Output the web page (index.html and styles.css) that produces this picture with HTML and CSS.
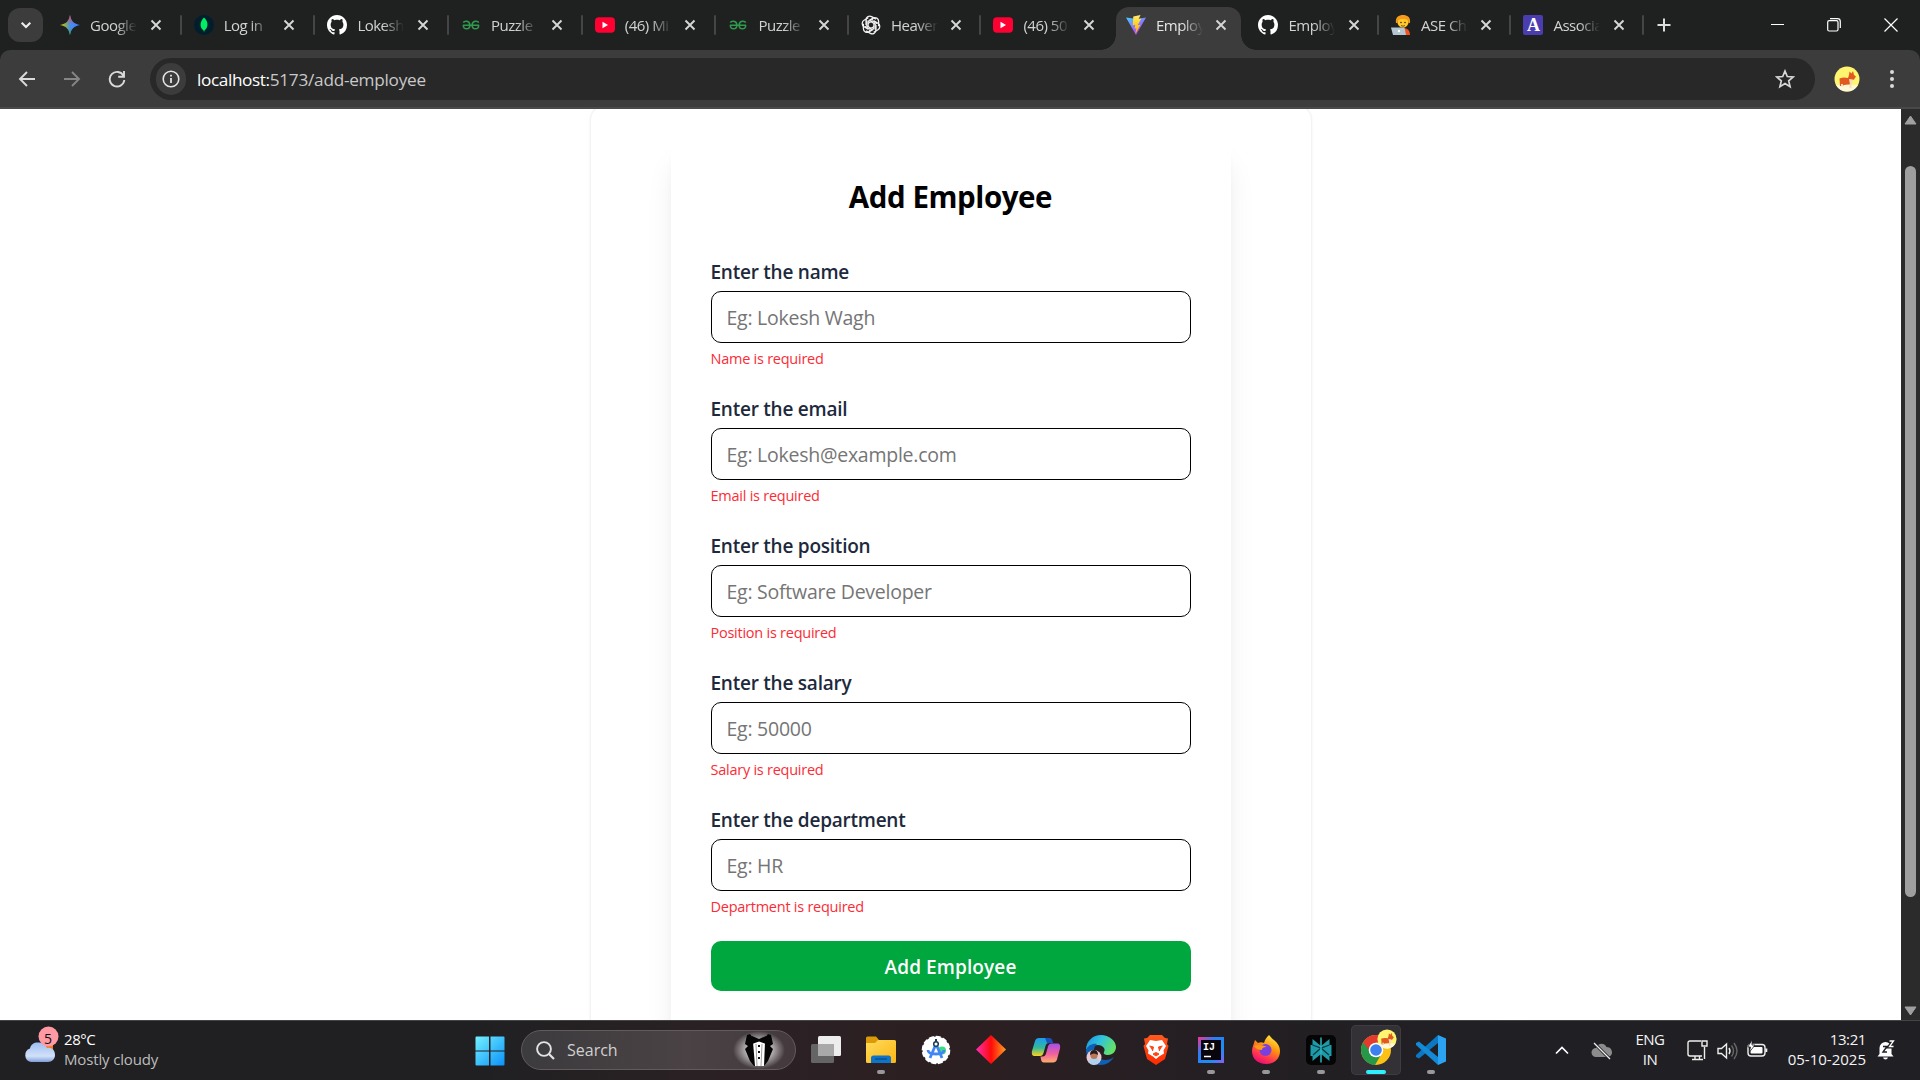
FILE: index.html
```html
<!DOCTYPE html>
<html lang="en">
<head>
<meta charset="utf-8">
<title>Employee</title>
<link rel="stylesheet" href="styles.css">
</head>
<body>
<svg class="defs" width="0" height="0" aria-hidden="true">
  <defs>
    <linearGradient id="spark" x1="0" y1=".5" x2="1" y2=".5"><stop offset="0" stop-color="#fbbc04"/><stop offset=".3" stop-color="#7fae5c"/><stop offset=".5" stop-color="#4a8cf0"/><stop offset="1" stop-color="#3b82f6"/></linearGradient>
    <linearGradient id="sparkTop" x1="0" y1="0" x2="0" y2="1"><stop offset="0" stop-color="#f0453a"/><stop offset=".45" stop-color="#f0453a" stop-opacity="0"/><stop offset=".65" stop-color="#34a853" stop-opacity="0"/><stop offset="1" stop-color="#34a853"/></linearGradient>
    <linearGradient id="vite" x1="0" y1="0" x2=".6" y2="1"><stop offset="0" stop-color="#41d1ff"/><stop offset="1" stop-color="#bd34fe"/></linearGradient>
    <linearGradient id="bolt" x1="0" y1="0" x2="0" y2="1"><stop offset="0" stop-color="#ffea83"/><stop offset=".3" stop-color="#ffdd35"/><stop offset="1" stop-color="#ffa800"/></linearGradient>
    <linearGradient id="win" x1="0" y1="0" x2="1" y2="1"><stop offset="0" stop-color="#74f0ff"/><stop offset="1" stop-color="#0a92f8"/></linearGradient>
    <linearGradient id="cloud" x1="0" y1="0" x2="0" y2="1"><stop offset="0" stop-color="#9dbdf3"/><stop offset=".7" stop-color="#d3e1f8"/><stop offset="1" stop-color="#7e9fdc"/></linearGradient>
    <linearGradient id="folder" x1="0" y1="0" x2="1" y2="1"><stop offset="0" stop-color="#ffdb5c"/><stop offset="1" stop-color="#fbb613"/></linearGradient>
    <linearGradient id="diamond"><stop offset="0" stop-color="#ff2fb4"/><stop offset=".5" stop-color="#ff0a0a"/><stop offset="1" stop-color="#ffa01e"/></linearGradient>
    <linearGradient id="copA" x1="0" y1="0" x2="0" y2="1"><stop offset="0" stop-color="#1d9bf0"/><stop offset=".55" stop-color="#35b99a"/><stop offset="1" stop-color="#ffd21c"/></linearGradient>
    <linearGradient id="copB" x1="0" y1="0" x2="0" y2="1"><stop offset="0" stop-color="#a250e8"/><stop offset=".55" stop-color="#f0609c"/><stop offset="1" stop-color="#ffae6b"/></linearGradient>
    <linearGradient id="edgeTop" x1="0" y1="0" x2="1" y2=".4"><stop offset="0" stop-color="#1c8fe0"/><stop offset=".5" stop-color="#2fc2df"/><stop offset="1" stop-color="#63e06a"/></linearGradient>
    <linearGradient id="brave" x1="0" y1="0" x2="0" y2="1"><stop offset="0" stop-color="#ff5a1f"/><stop offset="1" stop-color="#ff2a00"/></linearGradient>
    <linearGradient id="ij" x1="0" y1="0" x2="1" y2="1"><stop offset="0" stop-color="#ff318c"/><stop offset=".35" stop-color="#2c7df7"/><stop offset=".7" stop-color="#1f8df5"/><stop offset="1" stop-color="#8d5bf5"/></linearGradient>
    <linearGradient id="fox" x1=".8" y1="0" x2=".3" y2="1"><stop offset="0" stop-color="#fff14a"/><stop offset=".4" stop-color="#ff980e"/><stop offset=".75" stop-color="#ff3750"/><stop offset="1" stop-color="#eb0878"/></linearGradient>
    <linearGradient id="battle" x1="0" y1="0" x2="1" y2="0"><stop offset="0" stop-color="#0a7cc8"/><stop offset="1" stop-color="#35b0f5"/></linearGradient>
    <radialGradient id="glow"><stop offset="0" stop-color="#fff"/><stop offset=".5" stop-color="#fff" stop-opacity=".6"/><stop offset="1" stop-color="#fff" stop-opacity="0"/></radialGradient>
    <symbol id="x" viewBox="0 0 12 12"><path d="M1.500 1.500l9 9M10.500 1.500l-9 9" stroke="#d6d6d6" stroke-width="1.900" fill="none"/></symbol>
    <symbol id="github" viewBox="0 0 16 16"><path fill="#fff" d="M8 0C3.580 0 0 3.580 0 8c0 3.540 2.290 6.530 5.470 7.590.4.070.550-.170.550-.380 0-.190-.010-.820-.010-1.490-2.010.370-2.530-.490-2.690-.940-.090-.230-.480-.940-.820-1.130-.280-.150-.680-.520-.010-.530.630-.010 1.080.580 1.230.820.720 1.210 1.870.870 2.330.660.070-.520.280-.870.510-1.070-1.780-.200-3.640-.890-3.640-3.950 0-.870.310-1.590.820-2.150-.080-.200-.360-1.020.080-2.120 0 0 .670-.210 2.200.820.640-.180 1.320-.270 2-.270s1.360.090 2 .270c1.530-1.040 2.200-.820 2.200-.820.440 1.100.160 1.920.080 2.120.510.560.820 1.270.820 2.150 0 3.070-1.870 3.750-3.650 3.950.290.250.540.730.540 1.480 0 1.070-.010 1.930-.010 2.200 0 .210.150.460.550.380A8.010 8.010 0 0 0 16 8c0-4.420-3.580-8-8-8z"/></symbol>
    <symbol id="gfg" viewBox="0 0 20 12"><path d="M1 6.200h18M1.500 3.400C2.400 1.200 8.700.500 8.700 6.200c0 5.300-7 5.300-7.300 0M18.500 3.400C17.600 1.200 11.300.500 11.300 6.200c0 5.300 7 5.300 7.300 0" fill="none" stroke="#2f9a4c" stroke-width="1.700"/></symbol>
    <symbol id="yt" viewBox="0 0 20 15.500"><rect width="20" height="15.500" rx="4" fill="#ff0033"/><path d="M7.500 4.500v6.500l5.500-3.250z" fill="#fff"/></symbol>
    <symbol id="corgi" viewBox="0 0 26 26"><circle cx="13" cy="13" r="12.500" fill="#fff570"/><path d="M2 19h22a12.500 12.500 0 0 1-22 0z" fill="#fff8d8"/><path d="M5.500 12.500q4-1.500 8.500-.5l1-3 .5-3.500 2 2L19 5l1 4 2 1.500-2 3-2 1-1 4h-3l-4 .5-1.500 1H6z" fill="#e2591f"/><path d="M15 13l4 .5-1 5h-2zM15.500 18h2v4h-2zM7 18h2v2.500H7z" fill="#fbdcb4"/></symbol>
  </defs>
</svg>

<header class="tabstrip">
  <button class="tab-search"><svg width="12" height="12" viewBox="0 0 12 12"><path d="M1.700 3.800L6 8l4.300-4.200" fill="none" stroke="#eee" stroke-width="2.100"/></svg></button>
  <nav class="tabs">
    <div class="tab"><svg class="fav" viewBox="0 0 20 20"><path fill="url(#spark)" d="M10 0c1 6 4 9 10 10-6 1-9 4-10 10C9 14 6 11 0 10 6 9 9 6 10 0z"/><path fill="url(#sparkTop)" d="M10 0c1 6 4 9 10 10-6 1-9 4-10 10C9 14 6 11 0 10 6 9 9 6 10 0z"/></svg><span class="tab-title">Google</span><svg class="close"><use href="#x"/></svg></div>
    <div class="tab"><svg class="fav" viewBox="0 0 20 20"><circle cx="10" cy="10" r="10" fill="#001e2b"/><path d="M10 2.500c3 3 3.700 5.200 3.400 8-.3 2.300-1.500 3.800-3 5l-.3 2-.5-2c-1.500-1.200-2.800-2.700-3-5-.200-2.800.7-5 3.400-8z" fill="#00ed64"/></svg><span class="tab-title">Log in</span><svg class="close"><use href="#x"/></svg></div>
    <div class="tab"><svg class="fav"><use href="#github"/></svg><span class="tab-title">Lokesh</span><svg class="close"><use href="#x"/></svg></div>
    <div class="tab"><svg class="fav"><use href="#gfg" x="1" width="18"/></svg><span class="tab-title">Puzzle</span><svg class="close"><use href="#x"/></svg></div>
    <div class="tab"><svg class="fav"><use href="#yt"/></svg><span class="tab-title">(46) Mi</span><svg class="close"><use href="#x"/></svg></div>
    <div class="tab"><svg class="fav"><use href="#gfg" x="1" width="18"/></svg><span class="tab-title">Puzzle</span><svg class="close"><use href="#x"/></svg></div>
    <div class="tab"><svg class="fav" viewBox="-10 -10 20 20"><g fill="none" stroke="#f2f2f2" stroke-width="1.300"><path id="petal" d="M-2.500-4.300L2-6.900C4.500-8.300 7.600-6.400 7.600-3.700V1.300"/><use href="#petal" transform="rotate(60)"/><use href="#petal" transform="rotate(120)"/><use href="#petal" transform="rotate(180)"/><use href="#petal" transform="rotate(240)"/><use href="#petal" transform="rotate(300)"/><path id="spoke" d="M-2.900 2V-3.200L2-6"/><use href="#spoke" transform="rotate(60)"/><use href="#spoke" transform="rotate(120)"/><use href="#spoke" transform="rotate(180)"/><use href="#spoke" transform="rotate(240)"/><use href="#spoke" transform="rotate(300)"/></g></svg><span class="tab-title">Heaven</span><svg class="close"><use href="#x"/></svg></div>
    <div class="tab"><svg class="fav"><use href="#yt"/></svg><span class="tab-title">(46) 50</span><svg class="close"><use href="#x"/></svg></div>
    <div class="tab active"><svg class="fav" viewBox="0 0 20 20"><path d="M0 2.500L10 20 20 2.500l-9 1.600z" fill="url(#vite)"/><path d="M14.500 0L7.300 1.400l-.6 8.800 2.600-.5-.8 4 1.800-.5-1 6 5-9.500-2.700.5 3.800-6.700-2.700.4z" fill="url(#bolt)"/></svg><span class="tab-title">Employ</span><svg class="close"><use href="#x"/></svg></div>
    <div class="tab"><svg class="fav"><use href="#github"/></svg><span class="tab-title">Employ</span><svg class="close"><use href="#x"/></svg></div>
    <div class="tab"><svg class="fav" viewBox="0 0 20 20"><path d="M4 20c0-5 3-7 8-7 5 0 7 3 7 7z" fill="#f4511e"/><circle cx="12" cy="7" r="5.600" fill="#ffca28"/><path d="M5 8C4 2 8 0 12 0s8 2 7 8h-1.500c0-3-2-4-5.500-4S6.500 5 6.500 8z" fill="#f59a1c"/><path d="M10 10.500q2 1.500 4 0" stroke="#8a4b14" fill="none"/><circle cx="10" cy="7.500" r=".8" fill="#3c2a1a"/><circle cx="14" cy="7.500" r=".8" fill="#3c2a1a"/><path d="M0 12.500h13.500l1.500 7.500H2z" fill="#b4c6d2"/><circle cx="8" cy="16" r="1.200" fill="#fff"/></svg><span class="tab-title">ASE Ch</span><svg class="close"><use href="#x"/></svg></div>
    <div class="tab"><span class="fav letter">A</span><span class="tab-title">Associa</span><svg class="close"><use href="#x"/></svg></div>
  </nav>
  <button class="new-tab"><svg width="14" height="14" viewBox="0 0 14 14"><path d="M7 .5v13M.5 7h13" stroke="#ddd" stroke-width="2"/></svg></button>
  <div class="window-controls">
    <svg width="14" height="14"><path d="M1 6.500h13" stroke="#fff" stroke-width="1"/></svg>
    <svg width="14" height="14"><rect x=".7" y="2.700" width="10.300" height="10.300" rx="1.500" fill="none" stroke="#fff" stroke-width="1.200"/><path d="M3 .7h7.500a2.800 2.800 0 0 1 2.800 2.800V10" fill="none" stroke="#fff" stroke-width="1.200"/></svg>
    <svg width="14" height="14"><path d="M.5.5l13 13M13.500.5l-13 13" stroke="#fff" stroke-width="1.200"/></svg>
  </div>
</header>

<div class="toolbar-wrap">
<div class="toolbar">
  <svg class="nav" viewBox="0 0 18 18"><path d="M17 9H2.500M9 2L2 9l7 7" fill="none" stroke="#dadada" stroke-width="1.900"/></svg>
  <svg class="nav" viewBox="0 0 18 18"><path d="M1 9h14.500M9 2l7 7-7 7" fill="none" stroke="#858585" stroke-width="1.900"/></svg>
  <svg class="nav" viewBox="0 0 18 18"><path d="M15.500 5.800A7.300 7.300 0 1 0 16.300 10M16 1v5.800h-5.800" fill="none" stroke="#dadada" stroke-width="1.900"/></svg>
  <div class="omnibox">
    <span class="info"><svg width="18" height="18" viewBox="0 0 18 18"><circle cx="9" cy="9" r="7.800" fill="none" stroke="#e4e4e4" stroke-width="1.600"/><path d="M9 8v5M9 4.800v1.800" stroke="#e4e4e4" stroke-width="1.800"/></svg></span>
    <span class="url"><b>localhost:</b>5173/add-employee</span>
    <svg class="star" width="20" height="20" viewBox="0 0 20 20"><path d="M10 2l2.300 5.500 5.900.5-4.500 3.900 1.400 5.800L10 14.600l-5.100 3.100 1.400-5.800L1.800 8l5.900-.5z" fill="none" stroke="#d8d8d8" stroke-width="1.700"/></svg>
  </div>
  <svg class="avatar"><use href="#corgi"/></svg>
  <svg class="menu" width="6" height="20"><g fill="#dadada"><circle cx="3" cy="3" r="2"/><circle cx="3" cy="10" r="2"/><circle cx="3" cy="17" r="2"/></g></svg>
</div>
</div>

<main class="viewport">
  <div class="page">
    <section class="panel">
      <form class="card">
        <h1>Add Employee</h1>
        <div class="field"><label>Enter the name</label><div class="input">Eg: Lokesh Wagh</div><p>Name is required</p></div>
        <div class="field"><label>Enter the email</label><div class="input">Eg: Lokesh@example.com</div><p>Email is required</p></div>
        <div class="field"><label>Enter the position</label><div class="input">Eg: Software Developer</div><p>Position is required</p></div>
        <div class="field"><label>Enter the salary</label><div class="input">Eg: 50000</div><p>Salary is required</p></div>
        <div class="field"><label>Enter the department</label><div class="input">Eg: HR</div><p>Department is required</p></div>
        <button class="submit">Add Employee</button>
      </form>
    </section>
  </div>
  <aside class="scrollbar">
    <svg width="13" height="10"><path d="M6.500 1L12 9H1z" fill="#a0a0a0" stroke="#a0a0a0" stroke-linejoin="round"/></svg>
    <div class="track"><div class="thumb"></div></div>
    <svg width="13" height="10"><path d="M6.500 9L12 1H1z" fill="#a0a0a0" stroke="#a0a0a0" stroke-linejoin="round"/></svg>
  </aside>
</main>

<footer class="taskbar">
  <div class="weather">
    <svg width="36" height="38" viewBox="0 0 36 38"><path d="M18 15h11v10H18z" fill="#f47a16"/><path d="M7 36a7 7 0 0 1-1-13.500C7 17.500 11 16 15 16.500c5 .5 7 3.500 8 5.500 5-1 8 2.500 8 7 0 4-3 7-7 7z" fill="url(#cloud)"/><circle cx="24.500" cy="10.500" r="10" fill="#ff99a4"/></svg>
    <span class="badge">5</span>
    <div class="weather-text"><span class="bright">28°C</span><span>Mostly cloudy</span></div>
  </div>
  <div class="apps">
    <svg class="app start" viewBox="0 0 30 30"><path fill="url(#win)" d="M.5 1.500Q.5.500 1.500.5H14v14H.5zM15.500.5h13q1 0 1 1v13h-14zM.5 15.500H14v14H1.500q-1 0-1-1zM15.500 15.500h14v13q0 1-1 1h-13z"/></svg>
    <div class="search">
      <svg width="19" height="19" viewBox="0 0 19 19"><circle cx="8" cy="8" r="6.900" fill="none" stroke="#e3e3e3" stroke-width="1.900"/><path d="M13 13l5 5" stroke="#e3e3e3" stroke-width="2.200"/></svg>
      <span>Search</span>
      <svg class="tux" width="52" height="38" viewBox="0 0 52 38"><ellipse cx="26" cy="19" rx="26" ry="19" fill="url(#glow)"/><path d="M17 3l-3 1-2 9 3 2-3 3 5 12 4 5h10l4-5 5-12-3-3 3-2-2-9-3-1-4 5-5 1-5-1z" fill="#050505"/><path d="M20 11l6-1 6 1-1 24H22z" fill="#fff"/><path d="M19 5l7 3 7-3v8l-7-2.500L19 13z" fill="#050505"/><path d="M23 13l1 22M29 13l-1 22" stroke="#777" stroke-width=".7"/><path d="M26 14v2M26 20v2M26 26v2" stroke="#111" stroke-width="2"/></svg>
    </div>
    <div class="slot"><svg class="app" viewBox="0 0 30 30"><rect x="7" y="1" width="23" height="20" rx="1.500" fill="#ededed"/><rect y="9" width="23" height="19" rx="1.500" fill="#656565"/><path d="M7 9h16v12H7z" fill="#a9a9a9"/></svg></div>
    <div class="slot run"><svg class="app" viewBox="0 0 30 30"><path d="M0 3q0-1.500 1.500-1.500H10L13 5v4H0z" fill="#dd9a08"/><path d="M0 8h9l3-3h16.500Q30 5 30 6.500V26.500Q30 28 28.500 28H1.500Q0 28 0 26.500z" fill="url(#folder)"/><path d="M5 28v-5q0-2.500 2.500-2.500h15q2.500 0 2.500 2.500v5z" fill="#0f74c8"/><path d="M9 24h12" stroke="#08406f"/></svg></div>
    <div class="slot"><svg class="app" viewBox="0 0 30 30"><circle cx="15" cy="15" r="13.500" fill="#fff" stroke="#fff" stroke-width="1.600" stroke-dasharray="5 2"/><circle cx="21" cy="15.500" r="4" fill="#3ddc84"/><path d="M15 9L9 23M15 9l6 14M7 15q0 4 8 4t8-4" stroke="#4285f4" stroke-width="2.800" fill="none"/><circle cx="15" cy="9" r="2.300" fill="#fff" stroke="#1b3a57" stroke-width="1.500"/><path d="M15 4v3" stroke="#1b3a57" stroke-width="2"/></svg></div>
    <div class="slot"><svg class="app" viewBox="0 0 30 30"><path d="M15 0l15 14.500L15 29 0 14.500z" fill="url(#diamond)"/></svg></div>
    <div class="slot"><svg class="app" viewBox="0 0 30 30"><path d="M8 3h9c2 0 3 1 3.500 3l.5 2h-3c-2 0-3 1-3.500 3l-2 7c-.6 2-1.600 3-3.500 3H4c-3 0-3.500-2-3-5L4 6c.6-2 2-3 4-3z" fill="url(#copA)"/><path d="M14 3h4c2 0 3 1 3.500 3l.6 2h-6z" fill="#1554c0"/><path d="M22 27.500h-9c-2 0-2.500-1-3-3l-.5-3h2c2 0 3-1 3.500-3l2-7c.6-2 1.600-3 3.500-3H26c3 0 3.500 2 3 5l-3 11c-.6 2-2 3-4 3z" fill="url(#copB)"/></svg></div>
    <div class="slot"><svg class="app" viewBox="0 0 30 30"><path d="M0 15C0 6 7 0 15 0s15 6 15 12c0 5-4 8-8 8-3 0-5-1-4-3 2-3-1-7-6-7C6 10 2 13 0 15z" fill="url(#edgeTop)"/><path d="M0 15c2-5 7-7 11-6-4 3-4 9 0 13 5 4 12 4 17 0-3 5-8 8-13 8C6 30 0 23 0 15z" fill="#0f5fb5"/><circle cx="8" cy="22.500" r="7.500" fill="#e9c9cf"/><path d="M2.500 27q1-4 5.500-4t5.500 4Q8 32 2.500 27z" fill="#a9d3ee"/><circle cx="8" cy="20.500" r="3.600" fill="#b97858"/><path d="M4 20q0-5 4-5t4 5q-4-3-8 0z" fill="#2a1b18"/></svg></div>
    <div class="slot"><svg class="app" viewBox="0 0 30 30"><path d="M9 0h12l3 3 3 .5L26 9l1.500 2L24 24l-9 6-9-6L2.500 11 4 9 3 3.500 6 3z" fill="url(#brave)"/><path d="M9 5l6 1 6-1 4 6-2.500 4.500.5 3-5 3-3 2.500-3-2.500-5-3 .5-3L5 11z" fill="#fff"/><path d="M8.500 11l4 1-1 4M21.500 11l-4 1 1 4M12 19l3-1.500 3 1.500-3 2z" stroke="#ff4315" stroke-width="1" fill="#ff4315"/></svg></div>
    <div class="slot run"><svg class="app" viewBox="0 0 30 30"><path d="M2 2h26v26H2z" fill="url(#ij)"/><path d="M5 5h20v20H5z" fill="#08060c"/><path d="M8 21.500h7" stroke="#fff" stroke-width="1.500"/><text x="7" y="14.500" class="ij">IJ</text></svg></div>
    <div class="slot run"><svg class="app" viewBox="0 0 30 30"><path d="M18 0c2 2 3 4 5 5 4 3 6 7 6 11 0 8-6 13-14 13S1 24 1 16C1 12 3 9 4 5l3 3c2-1 4-1 6 0 1-4 3-6 5-8z" fill="url(#fox)"/><circle cx="14.500" cy="15" r="6" fill="#7a3fe0"/><path d="M3 11c4-2 9-1 13 1-4 0-5 1-5 3-3 0-6-1-8-4z" fill="#ff9a1a"/></svg></div>
    <div class="slot run"><svg class="app" viewBox="0 0 30 30"><rect width="30" height="30" rx="5" fill="#050505"/><path d="M15 11L6.500 4v6H4.500v11h2v5L15 19l8.500 7v-5h2V10h-2V4z" fill="#1f9aa8"/><path d="M15 13l-8 7M15 13l8 7M6.500 10l8.500 3 8.500-3" stroke="#06393f" stroke-width="1.200" fill="none"/><path d="M15 2.500v25" stroke="#2bb4c2" stroke-width="1.500"/></svg></div>
    <div class="slot run current"><svg class="app" viewBox="0 0 30 30"><circle cx="15" cy="15" r="15" fill="#fbc116"/><path d="M2 7.500A15 15 0 0 0 14 30l7-12-6-3z" fill="#279847"/><path d="M28 7.500H15L9 16 2 7.500A15 15 0 0 1 28 7.500z" fill="#e33b2e"/><circle cx="15" cy="15" r="7.300" fill="#fff"/><circle cx="15" cy="15" r="5.800" fill="#3c7ff0"/></svg><svg class="profile"><use href="#corgi"/></svg></div>
    <div class="slot run"><svg class="app" viewBox="0 0 30 30"><path d="M22 0L0 20v2l3 1.500L22 8z" fill="#0b78c4"/><path d="M3 6.500L0 8v2l22 20v-8z" fill="#1489d6"/><path d="M22 0l8 3.500v23L22 30z" fill="#2ba3f0"/></svg></div>
  </div>
  <div class="tray">
    <svg class="chev" width="14" height="9"><path d="M1 7.500l6-6 6 6" fill="none" stroke="#fff" stroke-width="1.700"/></svg>
    <svg class="cl" width="22" height="18"><path d="M5 15a4.500 4.500 0 0 1 0-9C7 1 13 0 15.500 5c4 0 5.500 3 5.500 5.500S19 15 16 15z" fill="#8c8c8c"/><path d="M3 1l16 16" stroke="#211f24" stroke-width="3"/><path d="M3 1l16 16" stroke="#eee" stroke-width="1.300"/></svg>
    <div class="lang"><span>ENG</span><span>IN</span></div>
    <svg class="net" width="22" height="22"><path d="M14 2H3Q1 2 1 4v11q0 2 2 2h12M5 20.500h11M8 17v3M12.500 17v3" fill="none" stroke="#eee" stroke-width="1.400"/><path d="M15 2h5v5h-5zM17.500 8v12" stroke="#eee" stroke-width="1.400" fill="none"/></svg>
    <svg class="vol" width="22" height="18"><path d="M1 6.500h3.500L9.500 2v14l-5-4.500H1z" fill="none" stroke="#eee" stroke-width="1.400"/><path d="M12 6q2 3 0 6" fill="none" stroke="#eee" stroke-width="1.400"/><path d="M14.500 3.500q4 5.500 0 11M17 1q6 8 0 16" fill="none" stroke="#666" stroke-width="1.400"/></svg>
    <svg class="bat" width="22" height="18"><rect x="1" y="4.500" width="17" height="11.500" rx="3" fill="none" stroke="#eee" stroke-width="1.400"/><rect x="3.500" y="7" width="12" height="6.500" rx="1" fill="#fff"/><path d="M19.300 8.500v3.500" stroke="#eee" stroke-width="2"/><path d="M5 0L.8 7h2.700L2.500 12 8 5H5z" fill="#fff" stroke="#211f24" stroke-width=".8"/></svg>
    <div class="clock"><span>13:21</span><span class="date">05-10-2025</span></div>
    <svg class="bell" width="18" height="20"><path d="M2.500 14V8a6 6 0 0 1 12 0v6l2 2.500H.5z" fill="#fff"/><path d="M6 17.500a2.600 2.600 0 0 0 5 0z" fill="#fff"/><path d="M6 6.500h4L6 12h4" fill="none" stroke="#211f24" stroke-width="1.400"/><path d="M11.500 1h5l-5 6h5" fill="none" stroke="#211f24" stroke-width="3"/><path d="M12.500 1h4l-4 5.500h4" fill="none" stroke="#fff" stroke-width="1.300"/></svg>
  </div>
</footer>
</body>
</html>
```
FILE: styles.css
```css
* { box-sizing: border-box; }

body {
  margin: 0;
  width: 1920px;
  height: 1080px;
  overflow: hidden;
  display: flex;
  flex-direction: column;
  font-family: "Open Sans", "Noto Sans", sans-serif;
  background: #1f2120;
}

button { border: 0; padding: 0; font: inherit; }
svg { flex: none; display: block; }
.defs { position: absolute; }

/* Tab strip */
.tabstrip {
  height: 50px;
  flex: none;
  display: flex;
  align-items: center;
  padding-left: 8px;
  background: #1f2120;
}

.tab-search {
  width: 35px;
  height: 34px;
  margin-right: 5px;
  border-radius: 12px;
  background: #3c3c3c;
  display: grid;
  place-items: center;
}

.tabs { display: flex; align-self: stretch; }

.tab {
  position: relative;
  width: 132.500px;
  padding-left: 12px;
  display: flex;
  align-items: center;
  color: #d2d2d2;
}
.tab:nth-child(-n+5) { width: 133.700px; }

.tab::after {
  content: "";
  position: absolute;
  right: 0;
  top: 15px;
  width: 2px;
  height: 20px;
  border-radius: 1px;
  background: #454545;
}

.tab:has(+ .active)::after { display: none; }

/* Selected tab: rounded body plus the two flared feet */
.tab.active::after {
  inset: 7px 5px 0 2px;
  width: auto;
  height: auto;
  border-radius: 13px 13px 0 0;
  background: #3c3c3c;
}
.tab.active::before {
  content: "";
  position: absolute;
  inset: auto -10px 0 -13px;
  height: 15px;
  background:
    radial-gradient(circle at 0 0, transparent 14.500px, #3c3c3c 15px) 0 0 / 15px 15px no-repeat,
    radial-gradient(circle at 100% 0, transparent 14.500px, #3c3c3c 15px) 100% 0 / 15px 15px no-repeat;
}

.tab.active > * { position: relative; z-index: 1; color: #e6e6e6; }

.fav { width: 20px; height: 20px; }
.tab-title {
  width: 47px;
  margin-left: 10px;
  white-space: nowrap;
  font-size: 15px;
  letter-spacing: -0.500px;
  -webkit-mask-image: linear-gradient(90deg, #000 55%, transparent);
  mask-image: linear-gradient(90deg, #000 55%, transparent);
}
.close { width: 12px; height: 12px; margin-left: 12.500px; }

.letter {
  display: grid;
  place-items: center;
  border-radius: 2px;
  background: #4a3db0;
  color: #fff;
  font: bold 18px "Liberation Serif", serif;
}

.new-tab { background: none; margin-left: 13px; }
.window-controls { display: flex; gap: 43px; margin-left: auto; padding-right: 22px; }

/* Address bar */
.toolbar-wrap { flex: none; background: #1f2120; }
.toolbar {
  height: 59px;
  display: flex;
  align-items: center;
  padding: 1px 25px 0 18px;
  border-radius: 10px 10px 0 0;
  border-bottom: 2px solid #4a4949;
  background: #3c3c3c;
}
.nav { width: 18px; height: 18px; margin-right: 27px; }
.omnibox {
  flex: 1;
  height: 42px;
  margin: 0 19px 0 -3px;
  padding: 0 20px 0 6px;
  border-radius: 21px;
  background: #282828;
  display: flex;
  align-items: center;
}
.info {
  width: 30px;
  height: 32px;
  border-radius: 16px;
  background: #3c3c3c;
  display: grid;
  place-items: center;
}
.url { flex: 1; margin-left: 11px; font-size: 17.200px; letter-spacing: -0.250px; color: #c9c9c9; }
.url b { font-weight: 400; color: #fff; letter-spacing: -0.380px; }
.avatar { width: 26px; height: 26px; margin-right: 29px; }

/* Page */
.viewport {
  flex: 1;
  min-height: 0;
  display: grid;
  grid-template-columns: 1fr 19px;
  overflow: hidden;
  background: #fff;
}
.page { overflow: hidden; display: flex; justify-content: center; }
.panel {
  width: 720px;
  height: 1010px;
  margin-top: -3px;
  padding: 28px 80px 0;
  border-radius: 14px;
  box-shadow: 0 0 3px rgba(0, 0, 0, .14);
}
.card {
  height: 960px;
  padding: 40px;
  border-radius: 20px;
  box-shadow: 0 25px 31px -6px rgba(0, 0, 0, .1), 0 10px 12px -7px rgba(0, 0, 0, .1);
}
.card h1 {
  margin: 3px 0 40px;
  text-align: center;
  font-size: 29.500px;
  line-height: 40px;
  letter-spacing: -0.430px;
  font-weight: 700;
}
.field { display: flex; flex-direction: column; height: 137px; }
.field label {
  align-self: flex-start;
  height: 30px;
  margin-bottom: 4px;
  line-height: 30px;
  font-size: 19px;
  letter-spacing: -0.240px;
  font-weight: 600;
  color: #1d293d;
}
.input {
  height: 52px;
  padding: 0 15px;
  display: flex;
  align-items: center;
  border: 1px solid #000;
  border-radius: 10px;
  font-size: 19.500px;
  letter-spacing: -0.250px;
  color: #757575;
}
.field p { margin: 5px 0 0; line-height: 22px; font-size: 14.500px; letter-spacing: -0.250px; color: #fb2c36; }
.submit {
  width: 100%;
  height: 50px;
  margin-top: -1px;
  padding-top: 1px;
  border-radius: 10px;
  background: #00a63e;
  color: #fff;
  font-size: 19px;
  letter-spacing: 0.100px;
  font-weight: 600;
}

.scrollbar {
  display: flex;
  flex-direction: column;
  align-items: center;
  padding: 6px 0 4px;
  background: #2b2b2b;
}
.track { flex: 1; padding-top: 41px; }
.thumb { width: 11px; height: 731px; border-radius: 6px; background: #9f9f9f; }

/* Taskbar */
.taskbar {
  height: 60px;
  flex: none;
  display: grid;
  grid-template-columns: 475px 1fr 365px;
  border-top: 1px solid #434545;
  background: linear-gradient(90deg, #202022 0, #202022 25%, #2b2124 38%, #2c1f22 50%, #231f23 65%, #202024 80%, #202024 100%);
  color: #fff;
  font-size: 15px;
}
.weather { position: relative; display: flex; align-items: center; padding: 0 0 4px 24px; }
.weather svg { margin-top: -8px; }
.badge { position: absolute; left: 44px; top: 8px; font-size: 14px; color: #111; line-height: 20px; }
.weather-text { display: flex; flex-direction: column; line-height: 20px; margin-left: 4px; color: #bdbdbd; letter-spacing: -0.150px; }
.weather-text .bright { color: #fff; letter-spacing: -0.450px; }

.apps { display: flex; align-items: center; }
.app { width: 30px; height: 30px; }
.start { margin-right: 16px; }
.search {
  width: 275px;
  height: 40px;
  margin: 0 5px 1px 0;
  padding: 0 10px 0 14px;
  display: flex;
  align-items: center;
  gap: 12px;
  border: 1px solid #625b5e;
  border-radius: 20px;
  background: linear-gradient(90deg, #3c3b3e, #4a4244 60%, #443a3e);
  color: #d0d0d0;
  font-size: 16px;
}
.tux { margin-left: auto; }
.slot {
  position: relative;
  width: 50px;
  height: 50px;
  margin: 0 5px 1px 0;
  flex: none;
  display: grid;
  place-items: center;
}
.run::after {
  content: "";
  position: absolute;
  left: 21px;
  bottom: 1px;
  width: 8px;
  height: 4px;
  border-radius: 2px;
  background: #98989a;
}
.current { border-radius: 5px; background: #333136; box-shadow: inset 0 0 0 1px #3e3c41; }
.current::after { left: 15px; width: 20px; background: #2feeff; }
.profile { position: absolute; left: 26px; top: 4px; width: 20px; height: 20px; }
.ij { font: bold 10px "Liberation Mono", monospace; fill: #fff; }

.tray { display: flex; align-items: center; color: #f4f4f4; line-height: 20px; }
.cl { margin-left: 22px; }
.lang { display: flex; flex-direction: column; align-items: center; width: 40px; margin: -3px 17px 0; letter-spacing: -0.500px; }
.net { margin-top: -2px; }
.vol { margin-left: 8px; }
.bat { margin: -3px 0 0 8px; }
.clock { display: flex; flex-direction: column; align-items: flex-end; margin: -3px 0 0 20px; width: 77px; white-space: nowrap; letter-spacing: -0.400px; }
.date { letter-spacing: 0; }
.bell { margin: -2px 0 0 11px; }
```
